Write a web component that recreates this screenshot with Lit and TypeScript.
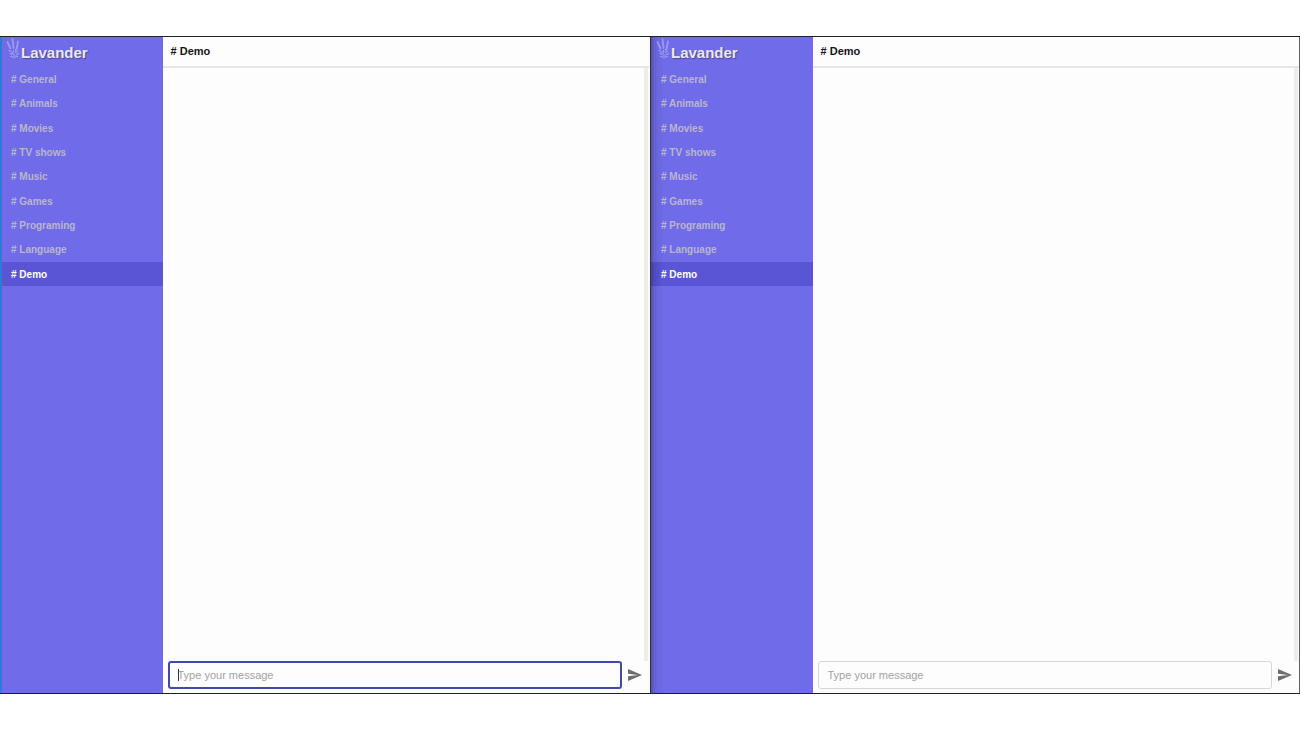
import { LitElement, html, css } from "lit";
import { customElement, property, state } from "lit/decorators.js";
import { classMap } from "lit/directives/class-map.js";

const ROOMS = ["General", "Animals", "Movies", "TV shows", "Music", "Games", "Programing", "Language", "Demo"];

@customElement("chat-window")
export class ChatWindow extends LitElement {
  @property({ type: Boolean }) active = false;
  @state() private room = "Demo";

  static styles = css`
    :host {
      display: flex;
      min-width: 0;
      box-sizing: border-box;
      border-top: 1px solid #20202c;
      border-bottom: 1px solid #20202c;
      background: #fdfdfd;
      font-family: "Liberation Sans", Arial, sans-serif;
    }
    .sidebar {
      flex: 0 0 25%;
      box-sizing: border-box;
      background: linear-gradient(to right, #5450aa 0, #635fd0 3px, #6b67de 7px, #706be8 14px);
      border-left: 1px solid #30304a;
    }
    .sidebar.active {
      background: #706be8;
      border-left: 2px solid #2f7ad6;
    }
    .brand {
      display: flex;
      height: 30px;
      margin: 0;
      padding-left: 4px;
      color: #e8e8f6;
      font-size: 15px;
      line-height: 32px;
      text-shadow: 1px 1px 1px #4c498c;
    }
    .sidebar:not(.active) .brand {
      padding-left: 5px;
    }
    .logo {
      width: 15px;
      height: 24px;
      flex: none;
    }
    .rooms {
      display: grid;
      grid-auto-rows: 1fr;
      height: 219px;
    }
    .room {
      display: flex;
      align-items: center;
      padding: 1px 0 0 9px;
      border: 0;
      background: transparent;
      color: #b9b7cb;
      font: bold 10px "Liberation Sans", Arial, sans-serif;
      text-align: left;
    }
    .sidebar:not(.active) .room {
      padding-left: 10px;
    }
    .room.current {
      background: #5a55d5;
      color: #ffffff;
    }
    .sidebar:not(.active) .room.current {
      background: linear-gradient(to right, #4541a0 0, #514cc2 4px, #5a55d5 12px);
    }
    .main {
      flex: 1;
      min-width: 0;
      display: flex;
      flex-direction: column;
      border-right: 1px solid transparent;
    }
    .main.last {
      border-right-color: #606064;
    }
    .title {
      margin: 0;
      padding-left: 8px;
      border-bottom: 2px solid #e6e6e6;
      color: #161616;
      font-size: 11px;
      line-height: 29px;
    }
    .messages {
      flex: 1;
      margin-right: 1px;
      border-right: 4px solid #ededed;
    }
    .composer {
      display: flex;
      align-items: center;
      height: 32px;
      padding: 0 5px 4px;
      box-sizing: border-box;
      gap: 4px;
    }
    .field {
      position: relative;
      flex: 1;
      min-width: 0;
      display: flex;
    }
    .input {
      flex: 1;
      min-width: 0;
      height: 28px;
      box-sizing: border-box;
      padding: 0 9px;
      border: 1px solid #d6d6d6;
      border-radius: 3px;
      background: #fdfdfd;
      color: #222222;
      font: 11px "Liberation Sans", Arial, sans-serif;
      outline: none;
    }
    .input.active {
      padding: 0 8px;
      border: 2px solid #4049ae;
    }
    .input::placeholder {
      color: #a2a2a2;
      opacity: 1;
    }
    .caret {
      position: absolute;
      left: 10px;
      top: 8px;
      width: 1px;
      height: 12px;
      background: #333333;
    }
    .send {
      display: flex;
      align-items: center;
      justify-content: center;
      width: 18px;
      height: 24px;
      padding: 0;
      border: 0;
      background: none;
      color: #6e6e6e;
    }
    .plane {
      width: 14px;
      height: 12px;
    }
  `;

  render() {
    const active = this.active;
    return html`
      <aside class=${classMap({ sidebar: true, active })}>
        <h1 class="brand">
          <svg class="logo" viewBox="0 0 15 24" fill="none" stroke="#c4c1fa" stroke-linecap="round" aria-hidden="true">
            <g stroke-width="1.8" opacity=".55">
              <path d="M1.5 5 4.5 11.5" />
              <path d="M6.5 2 7.6 11" />
              <path d="M12 4.5 10.6 12" />
            </g>
            <g stroke-width="1.1" opacity=".6">
              <path d="M3 13.5l2 1M4 16.5l2 1M4.5 19.5l2 .5M7.5 13.5v1.500M8 17.500v3.500M11.500 14l-2 1.500M12.500 16.500l-2.500 1.500M11.500 19.500l-2 .5M6 15.500l1 1M9.500 12.500v1" />
            </g>
          </svg>
          <span>Lavander</span>
        </h1>
        <nav class="rooms" aria-label="Rooms">
          ${ROOMS.map(
            (name) => html`<button
              class=${classMap({ room: true, current: name === this.room })}
              @click=${() => (this.room = name)}
            ># ${name}</button>`
          )}
        </nav>
      </aside>
      <section class=${classMap({ main: true, last: !active })}>
        <h2 class="title"># ${this.room}</h2>
        <div class="messages"></div>
        <form class="composer" @submit=${(e: Event) => e.preventDefault()}>
          <div class="field">
            <input
              class=${classMap({ input: true, active })}
              type="text"
              placeholder="Type your message"
              aria-label="Message"
            />
            ${active ? html`<span class="caret"></span>` : ""}
          </div>
          <button class="send" type="submit" aria-label="Send">
            <svg class="plane" viewBox="2 3 21 18" fill="currentColor" aria-hidden="true">
              <path d="M2.01 21 23 12 2.01 3 2 10l15 2-15 2z" />
            </svg>
          </button>
        </form>
      </section>
    `;
  }
}

@customElement("app-root")
export class AppRoot extends LitElement {
  static styles = css`
    :host {
      display: grid;
      grid-template-columns: 1fr 1fr;
      box-sizing: border-box;
      height: 100vh;
      padding: 36px 0;
      background: #ffffff;
    }
  `;

  render() {
    return html`
      <chat-window active></chat-window>
      <chat-window></chat-window>
    `;
  }
}
